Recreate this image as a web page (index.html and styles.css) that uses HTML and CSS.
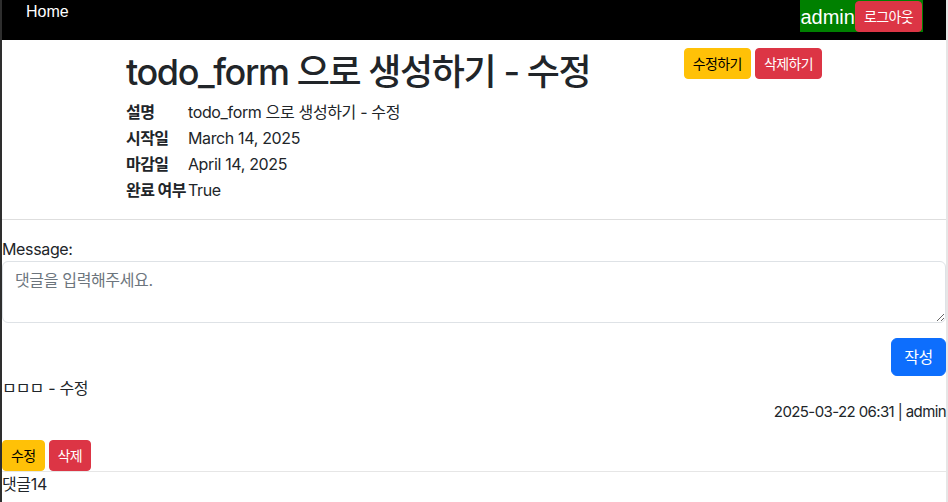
FILE: index.html
```html
<!DOCTYPE html>
<html lang="ko">
<head>
<meta charset="utf-8">
<title>todo_form 으로 생성하기 - 수정</title>
<link rel="stylesheet" href="styles.css">
</head>
<body>
<div class="page">
  <nav class="topbar">
    <a class="home-link" href="#">Home</a>
    <div class="user-box">
      <span class="user-name">admin</span>
      <button class="btn btn-sm btn-danger" type="button">로그아웃</button>
    </div>
  </nav>

  <main class="container">
    <div class="todo-head">
      <h1 class="todo-title">todo_form 으로 생성하기 - 수정</h1>
      <div class="todo-actions">
        <button class="btn btn-sm btn-warning" type="button">수정하기</button>
        <button class="btn btn-sm btn-danger" type="button">삭제하기</button>
      </div>
    </div>
    <table class="todo-info">
      <tr><th>설명</th><td>todo_form 으로 생성하기 - 수정</td></tr>
      <tr><th>시작일</th><td>March 14, 2025</td></tr>
      <tr><th>마감일</th><td>April 14, 2025</td></tr>
      <tr><th>완료 여부</th><td>True</td></tr>
    </table>
  </main>

  <hr class="divider">

  <form class="comment-form">
    <label class="form-label" for="msg">Message:</label>
    <textarea id="msg" class="form-control" rows="2" placeholder="댓글을 입력해주세요."></textarea>
    <div class="submit-row">
      <button class="btn btn-primary" type="button">작성</button>
    </div>
  </form>

  <div class="comment">
    <p class="comment-text"><span class="jamo">ㅁㅁㅁ</span> - 수정</p>
    <p class="comment-meta">2025-03-22 06:31 | admin</p>
    <div class="comment-actions">
      <button class="btn btn-sm btn-warning" type="button">수정</button>
      <button class="btn btn-sm btn-danger" type="button">삭제</button>
    </div>
  </div>
  <div class="comment comment-last">
    <p class="comment-text">댓글14</p>
  </div>
</div>
</body>
</html>
```

FILE: styles.css
```css
* { box-sizing: border-box; }

html, body {
  margin: 0;
  padding: 0;
  background: #fff;
}

body {
  font-family: "Inter", "Noto Sans CJK KR", sans-serif;
  font-size: 16px;
  line-height: 1.5;
  letter-spacing: -0.35px;
  color: #212529;
}

.page {
  min-height: 502px;
  border-left: 2px solid #2e2e2e;
  border-right: 2px solid #e6e6e6;
}

/* top bar */
.topbar {
  height: 40px;
  background: #000;
  display: flex;
  justify-content: space-between;
  align-items: flex-start;
  padding: 0 23px 0 24px;
  letter-spacing: 0;
}

.home-link {
  font-family: "Liberation Sans", Arial, sans-serif;
  font-size: 16px;
  line-height: 24px;
  color: #fff;
  text-decoration: none;
}

.user-box {
  display: flex;
  align-items: center;
  height: 32px;
  background: #008000;
  padding: 1px 1px 0 0;
}

.user-name {
  font-family: "Liberation Sans", Arial, sans-serif;
  font-size: 20px;
  color: #fff;
  line-height: 1;
}

/* buttons */
.btn {
  display: inline-block;
  font-family: "Inter", "Noto Sans CJK KR", sans-serif;
  font-size: 16px;
  line-height: 24px;
  letter-spacing: -0.35px;
  padding: 6px 12px;
  border: 1px solid transparent;
  border-radius: 6px;
  cursor: pointer;
  color: #fff;
}

.btn-sm {
  font-size: 14px;
  line-height: 21px;
  letter-spacing: -0.6px;
  padding: 4px 8px;
  border-radius: 4px;
}

.btn-danger { background: #dc3545; border-color: #dc3545; color: #fff; }
.btn-warning { background: #ffc107; border-color: #ffc107; color: #000; }
.btn-primary { background: #0d6efd; border-color: #0d6efd; color: #fff; }

/* container */
.container {
  width: 720px;
  margin: 0 auto;
  padding: 8px 12px 0;
}

.todo-head {
  display: flex;
  justify-content: space-between;
  align-items: flex-start;
}

.todo-title {
  margin: 0 0 5px;
  padding-top: 3px;
  font-size: 36px;
  font-weight: 500;
  line-height: 1.2;
  letter-spacing: -1.4px;
}

.todo-actions {
  display: flex;
  gap: 4px;
}

.todo-info {
  border-collapse: collapse;
}

.todo-info th,
.todo-info td {
  padding: 1px 0;
  text-align: left;
  vertical-align: top;
}

.todo-info th {
  font-weight: 700;
  padding-right: 1px;
  white-space: nowrap;
  letter-spacing: -0.55px;
}

.todo-info td {
  padding-left: 1px;
}

.divider {
  margin: 16px 0;
  border: 0;
  border-top: 1px solid #dedede;
}

/* comment form */
.comment-form {
  margin: 0;
}

.form-label {
  display: block;
  padding-top: 1px;
}

.form-control {
  display: block;
  width: 100%;
  height: 62px;
  padding: 6px 12px;
  font-family: "Inter", "Noto Sans CJK KR", sans-serif;
  font-size: 16px;
  line-height: 24px;
  letter-spacing: -0.35px;
  color: #212529;
  border: 1px solid #dee2e6;
  border-radius: 6px;
  resize: vertical;
}

.form-control::placeholder {
  color: #6c757d;
}

.submit-row {
  display: flex;
  justify-content: flex-end;
  margin-top: 15px;
}

/* comments */
.comment {
  border-bottom: 1px solid #e6e6e6;
}

.comment-last {
  border-bottom: 0;
}

.comment-text {
  margin: 0;
}

.jamo {
  letter-spacing: -1px;
  margin-right: 1px;
}

.comment-meta {
  margin: 0;
  text-align: right;
  font-size: 15px;
  line-height: 24px;
  letter-spacing: -0.6px;
}

.comment-actions {
  display: flex;
  gap: 4px;
  margin-top: 16px;
}
```
